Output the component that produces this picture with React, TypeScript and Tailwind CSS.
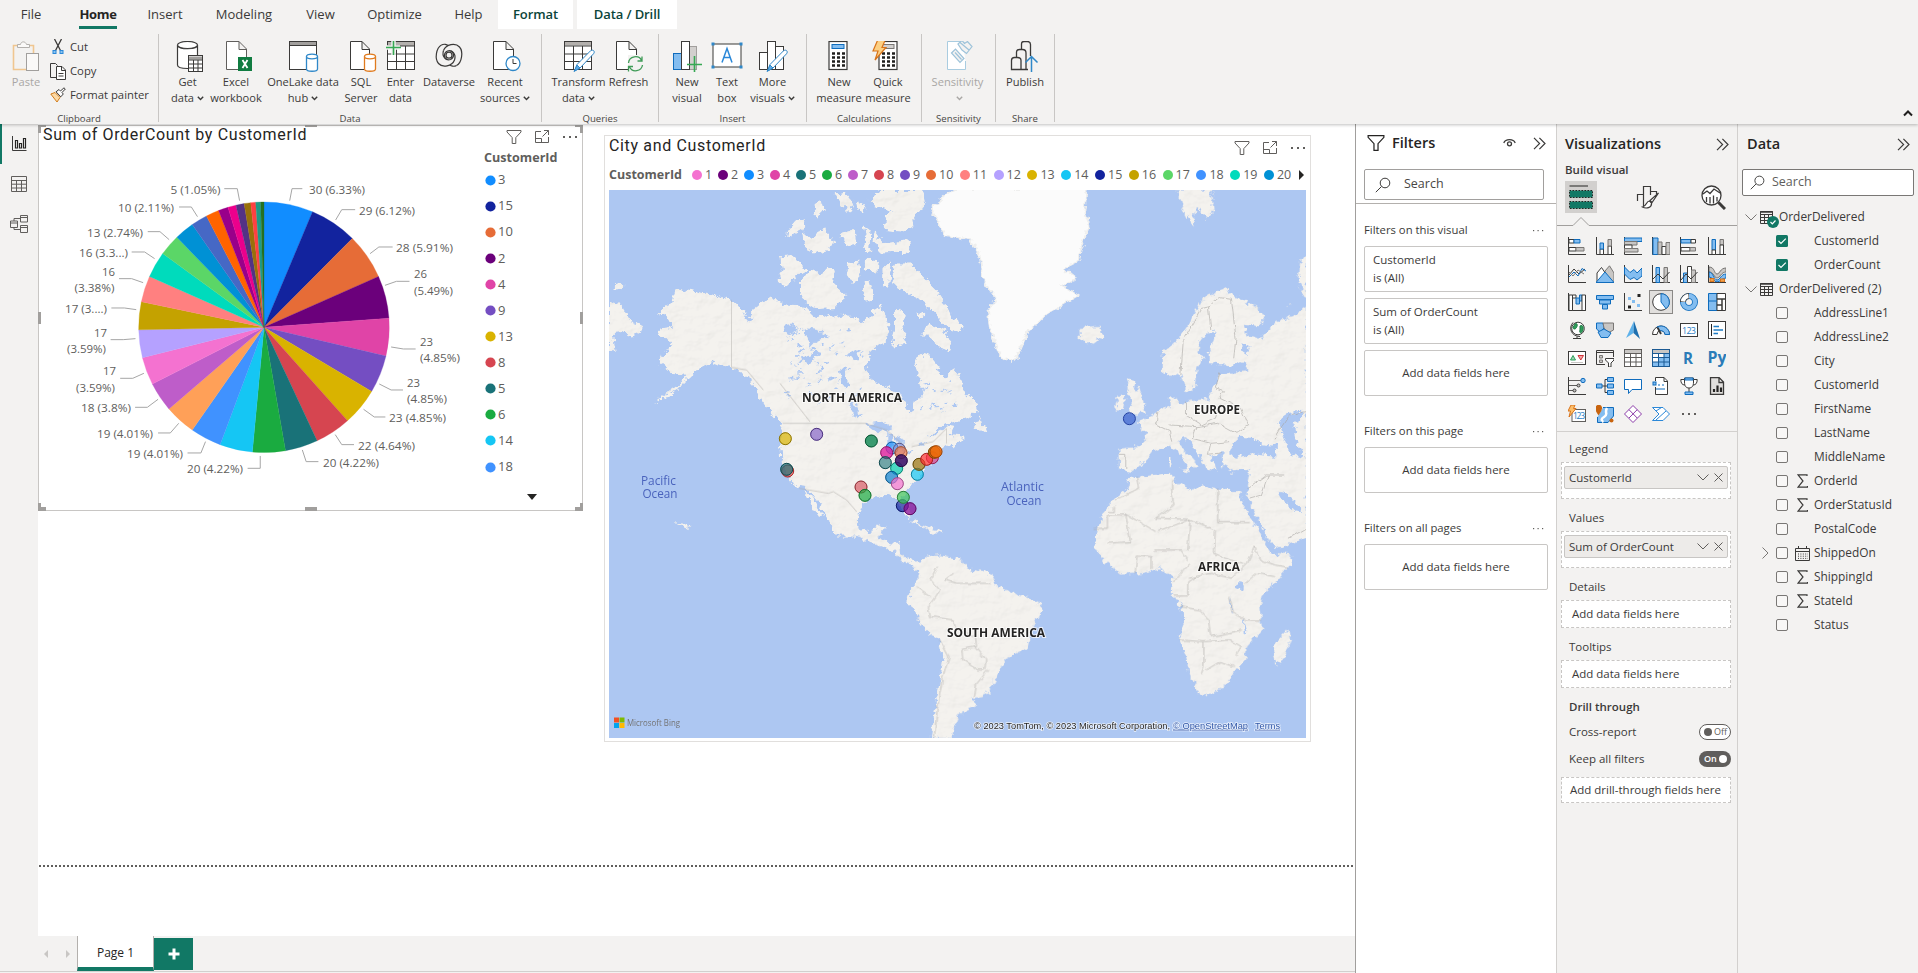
import React from "react";

type P = { children?: React.ReactNode };

/* ---------- shared icon frame ---------- */
function Ico({ w = 32, h = 32, vb, children, className = "" }: { w?: number; h?: number; vb?: string; className?: string } & P) {
  return (
    <svg width={w} height={h} viewBox={vb ?? `0 0 ${w} ${h}`} fill="none" stroke="#3b3a39" strokeWidth="1" className={`block shrink-0 ${className}`}>
      {children}
    </svg>
  );
}

const Chev = () => (
  <svg width="7" height="5" viewBox="0 0 7 5" fill="none" stroke="currentColor" strokeWidth="1.4" className="mb-px ml-[3px] inline-block">
    <path d="M.8 .8 3.5 3.6 6.2 .8" />
  </svg>
);

const Filter = ({ s = 16, c = "#605e5c", sw = 1 }: { s?: number; c?: string; sw?: number }) => (
  <svg width={s} height={s} viewBox="0 0 16 16" fill="none" stroke={c} strokeWidth={sw} className="block shrink-0">
    <path d="M1 1.5H15V3L9.8 8.6V14.5H6.2V8.6L1 3Z" />
  </svg>
);
const Focus = () => (
  <Ico w={16} h={16}>
    <g stroke="#605e5c">
      <path d="M7 2.5H1.5V13.5H14.5V8M1.5 9.5H7.5V13.5M8.5 7.5 14.5 1.5M10 1.5H14.5V6" />
    </g>
  </Ico>
);
const Dots3 = ({ c = "#605e5c" }: { c?: string }) => (
  <svg width="16" height="4" viewBox="0 0 16 4" fill={c} className="block shrink-0">
    <rect x="1" y="1" width="2" height="2" /><rect x="7" y="1" width="2" height="2" /><rect x="13" y="1" width="2" height="2" />
  </svg>
);
const Dbl = () => (
  <Ico w={13} h={13}><path d="M1 .8 6.6 6.5 1 12.2M6.4 .8 12 6.5 6.4 12.2" strokeWidth="1.2" /></Ico>
);
const Search = ({ s = 16 }: { s?: number }) => (
  <Ico w={s} h={s} vb="0 0 16 16"><circle cx="10" cy="6" r="4.8" /><path d="M6.5 9.5 .8 15.2" /></Ico>
);
const Calendar = () => (
  <Ico w={17} h={15}>
    <path d="M1.5 2.5H15.5V14.5H1.5ZM1.5 5.5H15.5M4.5 0V3M12.5 0V3" />
    <path d="M4 8H14M4 10.2H14M4 12.4H14" strokeDasharray="1 1.4" />
  </Ico>
);

/* ---------- ribbon icons ---------- */
const Paste = () => (
  <Ico w={30} h={32}>
    <path d="M9 4.5H2.5V28.5H15M18 4.5H22.5V12" stroke="#f0c690" strokeWidth="1.6" />
    <path d="M6.5 6.5V3.5H9.5C10 0 14.500 0 15.500 3.500H18.500V6.500Z" stroke="#b3b0ad" fill="#faf9f8" />
    <rect x="15.500" y="12.500" width="12" height="17" stroke="#a19f9d" fill="#faf9f8" />
  </Ico>
);
const Cut = () => (
  <Ico w={16} h={16}><path d="M4.500 0 10.500 11.500M11.500 0 5.500 11.500" strokeWidth="1.3" /><rect x="3" y="11.500" width="3" height="3" stroke="#2b88d8" fill="#8cc4f0" /><rect x="10" y="11.500" width="3" height="3" stroke="#2b88d8" fill="#8cc4f0" /></Ico>
);
const Copy = () => (
  <Ico w={16} h={17}><path d="M6 14.500H.5V.5H5.500L7.500 2.500" /><path d="M6.500 3.500H12L15.500 7V16.500H6.500ZM11.500 3.500V7.500H15.500M8.500 10.500H13.500M8.500 13H13.500" fill="#fff" /></Ico>
);
const Painter = () => (
  <Ico w={16} h={16}><path d="M.8 7 5 5.500 10 10.500 7 15Z" stroke="#d17b18" fill="#fbd9a5" /><path d="M6 4.800 9 2.500 10.500 4 14 .8 15.300 2 12 5.500 13.300 7 10.800 9.800Z" fill="#fff" /></Ico>
);
const GetData = () => (
  <Ico>
    <g transform="translate(-1 0)"><path d="M6.500 4V24C6.500 26.500 12 27.500 16.500 27.500H18V15H26.500V4C26.500 9 6.500 9 6.500 4Z" fill="#fff" strokeWidth="1.200" /><ellipse cx="16.500" cy="4" rx="10" ry="3.500" fill="#fff" strokeWidth="1.200" /></g>
    <rect x="16.500" y="14.500" width="14" height="16" fill="#fff" /><path d="M16.500 17H30.500" stroke="#a19f9d" strokeWidth="3" /><path d="M16.500 14.500H30.500V30.500H16.500ZM16.500 19H30.500M16.500 23H30.500M16.500 27H30.500M21.500 19V30.500M26 19V30.500" />
  </Ico>
);
const Excel = () => (
  <Ico>
    <path d="M6.500 .5H19L26.500 8V28.500H6.500ZM19 .5V8.500H26.500" fill="#fff" stroke="#605e5c" />
    <rect x="18" y="16" width="14" height="14" fill="#107c41" stroke="none" />
    <path d="M22.500 19 27.500 27M27.500 19 22.500 27" stroke="#fff" strokeWidth="1.800" />
  </Ico>
);
const Cyl = ({ x, y, c }: { x: number; y: number; c: string }) => (
  <g stroke={c} fill="#fff" strokeWidth="1.300"><path d={`M${x} ${y + 2.500}V${y + 15}C${x} ${y + 18} ${x + 11} ${y + 18} ${x + 11} ${y + 15}V${y + 2.500}`} /><ellipse cx={x + 5.500} cy={y + 2.500} rx="5.500" ry="2.300" /></g>
);
const OneLake = () => (
  <Ico><rect x="2.500" y=".5" width="27" height="28" fill="#fff" /><path d="M3 2.500H29" stroke="#a19f9d" strokeWidth="3" /><path d="M2.500 4.500H29.500" /><Cyl x={19.500} y={13} c="#2f88c9" /></Ico>
);
const Sql = () => (
  <Ico><path d="M5.500 .5H17L24.500 8V28.500H5.500ZM17 .5V8.500H24.500" fill="#fff" /><Cyl x={19.500} y={13} c="#e07b1f" /></Ico>
);
const Enter = () => (
  <Ico><rect x="2.500" y=".5" width="27" height="28" fill="#fff" /><path d="M3 3H29" stroke="#b3b0ad" strokeWidth="4" /><path d="M2.500 .5H29.500V28.500H2.500ZM2.500 5H29.500M2.500 13H29.500M2.500 20.500H29.500M11.500 5V28.500M20.500 5V28.500" /><path d="M8.500 -2V14M.5 6.500H15" stroke="#f3f2f1" strokeWidth="4.500" /><path d="M8.500 -1V14M1 6.500H16" stroke="#36a853" strokeWidth="1.600" /></Ico>
);
const Dataverse = () => (
  <Ico>
    <g strokeWidth="1.200">
      <path d="M8.500 4C3 7 1.500 18 5.500 22.500C9.500 27 19 25.500 21.500 19C23.500 13 19 8.500 14.500 10C10.500 11.500 10.500 17.500 14.500 18.500" />
      <path d="M23.500 24.500C29 21.500 30.500 10.500 26.500 6C22.500 1.500 13 3 10.500 9.500" />
      <path d="M8.500 4C11 2.500 14 3.500 15 4.500M23.500 24.500C21 26 18 25 17 24" />
      <path d="M10.500 9.500C8.500 15.500 13 20 17.500 18.500C21.500 17 21.500 11 17.500 10" />
      <circle cx="16" cy="14.200" r="3" />
    </g>
  </Ico>
);
const Recent = () => (
  <Ico><path d="M4.500 .5H17L24.500 8V28.500H4.500ZM17 .5V8.500H24.500" fill="#fff" /><circle cx="24" cy="22.500" r="7" fill="#fff" stroke="#2f88c9" strokeWidth="1.300" /><path d="M24 18V22.500H27.500" /></Ico>
);
const Pen = () => (
  <g stroke="#2f88c9"><path d="M12 29.500 14 23.500 27.500 9.800C30 8 32.500 10.500 30.500 12.800L17 27Z" fill="#fff" /><path d="M11 30.500 14 24 17 27Z" fill="#5ea9e2" /></g>
);
const Transform = () => (
  <Ico><rect x="1.500" y=".5" width="27" height="28" fill="#fff" /><path d="M2 2.500H28" stroke="#b3b0ad" strokeWidth="4" /><path d="M1.500 .5H28.500V28.500H1.500ZM1.500 5H28.500M1.500 13H28.500M1.500 20.500H28.500M10.500 5V28.500M19.500 5V28.500" /><Pen /></Ico>
);
const Refresh = () => (
  <Ico><path d="M3.500 .5H16L23.500 8V28.500H3.500ZM16 .5V8.500H23.500" fill="#fff" /><rect x="15" y="14" width="15" height="17" fill="#f3f2f1" stroke="none" /><path d="M15.500 22C16 15 26 13.500 28.500 19.500M29 15.500V20H24.500M29.500 24C28.500 30.500 19.500 32 16.500 26M15.500 30.500V25.500H20" stroke="#3f9b57" strokeWidth="1.300" /></Ico>
);
const NewVisual = () => (
  <Ico><rect x="18.500" y="5.500" width="7" height="23" fill="#d2d0ce" stroke="#a19f9d" /><rect x="2.500" y="12.500" width="8" height="16" fill="#83bdf0" stroke="#0f6cbd" /><rect x="10.500" y=".5" width="8" height="28" fill="#fff" /><path d="M23.500 15V31M16 23.500H31" stroke="#36a853" strokeWidth="1.600" /></Ico>
);
const TextBox = () => (
  <Ico><rect x="2" y="3" width="28" height="23" fill="#fff" /><path d="M11 21.500 16 7.500 21 21.500M12.800 16.500H19.200" stroke="#2b88d8" strokeWidth="1.500" /><g fill="#2f88c9" stroke="none"><rect x=".5" y="1.500" width="3" height="3" /><rect x="28.500" y="1.500" width="3" height="3" /><rect x=".5" y="24.500" width="3" height="3" /><rect x="28.500" y="24.500" width="3" height="3" /></g></Ico>
);
const MoreVisuals = () => (
  <Ico><rect x="2.500" y="11.500" width="8" height="17" fill="#fff" /><rect x="10.500" y=".5" width="8" height="28" fill="#fff" /><rect x="18.500" y="5.500" width="8" height="23" fill="#fff" /><g transform="translate(-1 0)"><Pen /></g></Ico>
);
const Calc = ({ hl = "#83bdf0", hs = "#0f6cbd" }: { hl?: string; hs?: string }) => (
  <g><rect x="7" y=".5" width="18" height="28" fill="#fff" strokeWidth="1.200" /><rect x="10" y="3.500" width="12" height="4" fill={hl} stroke={hs} /><path d="M10 12.500H23M10 16.500H23M10 20.500H23M10 24.500H23" strokeWidth="2.400" strokeDasharray="3 2" stroke="#201f1e" /></g>
);
const NewMeasure = () => <Ico><g transform="translate(-1 0)"><Calc /></g></Ico>;
const Quick = () => (
  <Ico><Calc hl="#d2d0ce" hs="#797775" /><path d="M5.500 -1H13L10 6H14L3 18.500 6 9.500H1Z" transform="translate(0 .5)" fill="#fcd083" stroke="#d8731b" strokeWidth="1.200" /></Ico>
);
const Sens = () => (
  <Ico><path d="M20.500 .5H5.500V28.500H23.500V20" stroke="#a9cce0" fill="#fff" /><g stroke="#9dc3da" strokeWidth="1.200"><path d="M9.500 12 13.500 8 22 17.500 18 21.500ZM13 11.500 19.500 18.500" fill="#f3f2f1" /><path d="M16 3 20 -.5 22.500 2.500 25.500 .5 30 5.500 24.500 12.500 20 9ZM18 1.500 27 9" fill="#f3f2f1" /></g></Ico>
);
const Publish = () => (
  <Ico><path d="M12.500 8V3.500C12.500 1.500 13 .5 15 .5H18.500C20.500 .5 21.500 1.500 21.500 3.500V15M7.500 16V11C7.500 9 8.500 8.500 10.500 8.500H13.500C16 8.500 17 9.500 17 12V28.500M2.500 28.500V19.500C2.500 17.500 3.500 16.500 5.500 16.500H8.500C11 16.500 12 17.500 12 19.500V28.500ZM11 28.500H19" strokeWidth="1.300" /><path d="M22.500 31V16M16.500 21.500 22.500 15.500 28.500 21.500" stroke="#2f88c9" strokeWidth="1.500" /></Ico>
);

function Btn({ w, icon, a, b, chev, off }: { w: string; icon: React.ReactNode; a: string; b?: string; chev?: boolean; off?: boolean }) {
  return (
    <div className={`flex shrink-0 flex-col items-center ${w} ${off ? "text-[#a9a7a5]" : "text-[#3b3a39]"}`}>
      {icon}
      <div className="mt-px h-4 whitespace-nowrap text-[11.100px] leading-4">{a}</div>
      <div className="h-4 whitespace-nowrap text-[11.100px] leading-4">{b}{chev && <Chev />}</div>
    </div>
  );
}
function Group({ w, name, pad, children }: { w: string; name: string; pad: string } & P) {
  return (
    <div className={`flex h-[88px] shrink-0 flex-col border-r border-[#c8c6c4] ${w}`}>
      <div className={`flex h-[76px] pt-[7px] ${pad}`}>{children}</div>
      <div className="h-[12px] text-center text-[9.600px] leading-[17px] text-[#484644]">{name}</div>
    </div>
  );
}

function Ribbon() {
  const tab = "flex h-[30px] items-center justify-center shrink-0 text-[13px] text-[#3b3a39]";
  return (
    <header className="relative z-10 h-[124px] shrink-0 bg-[#f3f2f1] shadow-[0_1px_3px_rgba(0,0,0,0.25)]">
      <div className="flex h-[29px]">
        <div className={`${tab} w-[62px]`}>File</div>
        <div className="flex w-[72px] shrink-0 justify-center">
          <div className="flex h-[29px] w-[38px] items-center justify-center border-b-[3px] border-[#117865] pt-[3px] text-[13px] font-bold tracking-[-0.300px] text-[#252423]">Home</div>
        </div>
        <div className={`${tab} w-[62px]`}>Insert</div>
        <div className={`${tab} w-[96px]`}>Modeling</div>
        <div className={`${tab} w-[57px]`}>View</div>
        <div className={`${tab} w-[91px]`}>Optimize</div>
        <div className={`${tab} w-[57px]`}>Help</div>
        <div className="ml-px flex w-[75px] shrink-0 items-center justify-center bg-white text-[13px] font-semibold tracking-[-0.100px] text-[#0b453a]">Format</div>
        <div className="ml-1 flex w-[100px] shrink-0 items-center justify-center bg-white text-[13px] font-semibold tracking-[-0.100px] text-[#0b453a]">Data / Drill</div>
      </div>
      <div className="flex pt-[5px]">
        <Group w="w-[159px]" name="Clipboard" pad="pl-[8px]">
          <Btn w="w-[36px]" icon={<Paste />} a="Paste" off />
          <div className="ml-[6px] flex flex-col text-[11.300px] text-[#3b3a39]">
            <div className="-mt-[3px] flex h-[18px] items-center gap-[4px]"><Cut />Cut</div>
            <div className="mt-[6px] flex h-[18px] items-center gap-[4px]"><Copy />Copy</div>
            <div className="mt-[6px] flex h-[18px] items-center gap-[4px] whitespace-nowrap"><Painter />Format painter</div>
          </div>
        </Group>
        <Group w="w-[383px]" name="Data" pad="pl-[9px]">
          <Btn w="w-[39px]" icon={<GetData />} a="Get" b="data" chev />
          <Btn w="w-[58px]" icon={<Excel />} a="Excel" b="workbook" />
          <Btn w="w-[76px]" icon={<OneLake />} a="OneLake data" b="hub" chev />
          <Btn w="w-[40px]" icon={<Sql />} a="SQL" b="Server" />
          <Btn w="w-[39px]" icon={<Enter />} a="Enter" b="data" />
          <Btn w="w-[58px]" icon={<Dataverse />} a="Dataverse" />
          <Btn w="w-[54px]" icon={<Recent />} a="Recent" b="sources" chev />
        </Group>
        <Group w="w-[117px]" name="Queries" pad="pl-[8px]">
          <Btn w="w-[57px]" icon={<Transform />} a="Transform" b="data" chev />
          <Btn w="w-[43px]" icon={<Refresh />} a="Refresh" />
        </Group>
        <Group w="w-[148px]" name="Insert" pad="pl-[7px]">
          <Btn w="w-[42px]" icon={<NewVisual />} a="New" b="visual" />
          <Btn w="w-[38px]" icon={<TextBox />} a="Text" b="box" />
          <Btn w="w-[53px]" icon={<MoreVisuals />} a="More" b="visuals" chev />
        </Group>
        <Group w="w-[115px]" name="Calculations" pad="pl-[8px]">
          <Btn w="w-[48px]" icon={<NewMeasure />} a="New" b="measure" />
          <Btn w="w-[50px]" icon={<Quick />} a="Quick" b="measure" />
        </Group>
        <Group w="w-[74px]" name="Sensitivity" pad="pl-[8px]"><Btn w="w-[55px]" icon={<Sens />} a="Sensitivity" chev off /></Group>
        <Group w="w-[59px]" name="Share" pad="pl-[8px]"><Btn w="w-[42px]" icon={<Publish />} a="Publish" /></Group>
        <div className="flex flex-1 items-end justify-end pr-[5px] pb-[5px]">
          <svg width="10" height="7" viewBox="0 0 10 7" fill="none" stroke="#201f1e" strokeWidth="2"><path d="M1 5.500 5 1.500 9 5.500" /></svg>
        </div>
      </div>
    </header>
  );
}

/* ---------- pie visual ---------- */
const SLICES: [number, string][] = [
  [30, "#118dff"], [29, "#12239e"], [28, "#e66c37"], [26, "#6b007b"], [23, "#e044a7"], [23, "#744ec2"], [23, "#d9b300"], [22, "#d64550"],
  [20, "#197278"], [20, "#1aab40"], [20, "#15c6f4"], [19, "#4092ff"], [19, "#ffa058"], [18, "#be5dc9"], [17, "#f472d0"], [17, "#b5a1ff"],
  [17, "#c4a200"], [16, "#ff8080"], [16, "#00dbbc"], [13, "#5bd667"], [12, "#0091d5"], [10, "#4668c5"], [8, "#ff6300"], [6, "#99008a"],
  [5, "#ec008c"], [5, "#533285"], [4, "#99700a"], [3, "#ff4141"], [3, "#1f9a85"], [2, "#257123"],
];
/* text, x, y, width */
const LABELS: [string, number, number, number][] = [
  ["30 (6.33%)", 309, 190, 56], ["29 (6.12%)", 359, 211, 56], ["28 (5.91%)", 396, 248, 57], ["26", 414, 274, 13], ["(5.49%)", 414, 291, 39],
  ["23", 420, 342, 13], ["(4.85%)", 420, 358, 40], ["23", 407, 383, 13], ["(4.85%)", 407, 399, 40], ["23 (4.85%)", 389, 418, 57], ["22 (4.64%)", 358, 446, 57],
  ["20 (4.22%)", 323, 463, 56], ["20 (4.22%)", 187, 469, 56], ["19 (4.01%)", 127, 454, 56], ["19 (4.01%)", 97, 434, 56], ["18 (3.8%)", 81, 408, 50],
  ["17", 103, 371, 13], ["(3.59%)", 76, 388, 39], ["17", 94, 333, 13], ["(3.59%)", 67, 349, 39], ["17 (3....)", 65, 309, 42], ["16", 102, 272, 13],
  ["(3.38%)", 74.500, 287.500, 40], ["16 (3.3...)", 79, 253, 49], ["13 (2.74%)", 87, 233, 56], ["10 (2.11%)", 118, 208, 56], ["5 (1.05%)", 170.500, 190, 50],
];
const LEADERS =
  "M757 242 763 206 790 206M877 300 893 269 928 269M967 401 990 381 1026 381M1006 496 1036 484 1070 484M1022 681 1054 687 1086 687M991 792 1022 810 1053 810M950 868 978 891 1007 891M876 944 893 974 925 974M790 990 800 1025 832 1025M680 1008 680 1045 647 1045M537 965 525 999 490 999M467 910 445 939 413 939M413 838 385 862 353 862M376 760 347 775 314 775M354 656 322 659 289 659M356 569 325 564 291 564M374 488 344 476 311 476M404 416 378 396 344 396M442 359 418 335 386 335M516 290 500 261 468 261M626 242 620 206 586 206";

function Pie() {
  const cx = 264, cy = 327.300, r = 125.300;
  let acc = 0;
  const pt = (v: number) => {
    const a = (v / 474) * Math.PI * 2;
    return `${(cx + r * Math.sin(a)).toFixed(2)} ${(cy - r * Math.cos(a)).toFixed(2)}`;
  };
  return (
    <svg width="440" height="340" viewBox="44 152 440 340" className="block shrink-0">
      {SLICES.map(([v, c], i) => {
        const s = acc;
        acc += v;
        return <path key={i} d={`M${cx} ${cy}L${pt(s)}A${r} ${r} 0 0 1 ${pt(acc)}Z`} fill={c} stroke={c} strokeWidth=".3" />;
      })}
      <path d={LEADERS} transform="translate(0 120) scale(.3827 .3333)" fill="none" stroke="#a6a6a6" vectorEffect="non-scaling-stroke" />
      <g fill="#605e5c" fontSize="11.500" fontFamily="'Open Sans', sans-serif">
        {LABELS.map(([t, x, y, w], i) => (
          <text key={i} x={x} y={y + 4} textLength={w} lengthAdjust="spacingAndGlyphs">{t}</text>
        ))}
      </g>
    </svg>
  );
}
const Corner = ({ c }: { c: string }) => <div className={`absolute border-[#a19f9d] ${c}`} />;

function PieVisual() {
  const legend: [string, string][] = [
    ["3", "#118dff"], ["15", "#12239e"], ["10", "#e66c37"], ["2", "#6b007b"], ["4", "#e044a7"], ["9", "#744ec2"], ["13", "#d9b300"],
    ["8", "#d64550"], ["5", "#197278"], ["6", "#1aab40"], ["14", "#15c6f4"], ["18", "#4092ff"],
  ];
  return (
    <section className="relative mt-px flex h-[386px] w-[545px] shrink-0 flex-col border border-[#c8c6c4]">
      <Corner c="-left-px -top-px h-2 w-2 border-l-[3px] border-t-2" />
      <Corner c="-right-px -top-px h-2 w-2 border-r-[3px] border-t-2" />
      <Corner c="-left-px -bottom-px h-2 w-2 border-b-[4px] border-l-[3px]" />
      <Corner c="-right-px -bottom-px h-2 w-2 border-b-[4px] border-r-[3px]" />
      <Corner c="left-[266px] -top-px w-[12px] border-t-2" />
      <Corner c="left-[266px] -bottom-px w-[12px] border-t-[4px]" />
      <Corner c="-left-px top-[186px] h-[12px] border-l-[3px]" />
      <Corner c="-right-px top-[186px] h-[12px] border-l-[3px]" />
      <div className="flex h-[26px] items-start justify-between pr-[4px] pl-[4px]">
        <h2 className="font-['Roboto',sans-serif] text-[16px] leading-[18px] tracking-[0.650px] text-[#252423]">Sum of OrderCount by CustomerId</h2>
        <div className="mt-[3px] flex items-center gap-[12px]"><Filter /><Focus /><Dots3 /></div>
      </div>
      <div className="flex">
        <div className="ml-[5px]"><Pie /></div>
        <div className="flex flex-col">
          <div className="-mt-[3px] text-[12.600px] leading-[18px] font-bold text-[#605e5c]">CustomerId</div>
          <div className="flex flex-col">
            {legend.map(([n, c]) => (
              <div key={n} className="flex h-[26.100px] items-center gap-[2px] pl-px text-[13px] text-[#605e5c]">
                <svg width="11" height="11" viewBox="0 0 11 11"><circle cx="5.500" cy="5.500" r="5.100" fill={c} /></svg>{n}
              </div>
            ))}
          </div>
          <svg width="10" height="6" viewBox="0 0 10 6" className="mt-[14px] ml-[43px]"><path d="M0 0H10L5 6Z" fill="#252423" /></svg>
        </div>
      </div>
    </section>
  );
}

/* ---------- map visual ---------- */
const NA =
  "M255 325 300 336 345 348 395 362 430 385 447 415 470 378 512 350 550 372 590 375 620 392 650 408 680 402 700 412 735 405 760 408 790 425 812 405 830 378 845 375 860 420 870 455 850 490 812 520 800 560 815 600 860 620 900 640 915 670 935 700 945 665 970 640 955 590 945 560 955 520 985 525 1010 555 1030 590 1060 570 1085 600 1090 630 1132 670 1137 690 1110 715 1060 727 1020 740 985 775 1020 752 1050 738 1062 742 1050 765 1100 770 1060 800 1035 790 1020 810 1022 825 1000 838 970 865 955 900 925 925 905 950 918 965 935 1005 920 1012 900 985 890 955 860 945 830 952 800 958 780 985 772 1030 778 1070 700 1070 690 1025 660 975 625 925 600 922 575 905 560 880 545 850 540 800 548 742 525 710 500 680 480 650 455 600 420 580 395 562 340 545 310 560 270 592 230 632 155 674 240 610 258 588 215 582 180 555 190 520 215 500 205 480 170 460 175 445 215 440 200 415 175 395 215 370 225 335Z";
const BAJA = "M612 928 640 950 655 985 672 1015 655 1008 632 975 620 948Z";
const ARCTIC = [
  "M540 228 575 225 605 250 618 270 590 285 565 318 532 305 545 270Z",
  "M600 300 640 265 665 285 690 262 705 275 700 310 740 350 700 385 650 388 612 362 600 330Z",
  "M745 250 775 240 780 300 760 315 740 285Z", "M800 235 835 240 830 275 800 272Z", "M790 310 805 300 820 360 795 365Z",
  "M875 245 850 270 848 315 865 325 868 275Z", "M885 250 930 250 970 290 1010 330 1040 375 1055 410 1090 435 1080 460 1040 440 1000 395 960 360 930 340 890 330 872 290Z",
  "M985 430 1030 450 1060 490 1050 515 1015 500 980 470 960 470Z", "M885 400 900 385 915 410 905 440 925 490 880 500 875 470 885 440Z",
  "M585 125 612 120 608 145 560 172 565 150Z", "M605 150 640 180 660 150 680 145 685 175 705 180 690 210 640 220 612 195Z",
  "M715 160 765 150 770 200 745 205 735 180Z", "M790 135 812 150 808 215 790 205 800 180Z", "M825 150 850 190 925 180 930 215 840 218 820 180Z",
  "M805 60 840 30 970 30 975 70 940 115 945 145 905 155 850 150 855 110 880 95 820 75Z", "M705 40 735 35 760 70 750 98 725 78Z", "M770 60 795 75 790 98 775 90Z",
  "M640 75 665 62 672 88 650 118 645 95Z", "M45 312 70 315 70 325 42 326Z",
  "M27 365 60 375 95 425 132 435 122 460 95 470 60 450 38 475 45 515 27 512Z",
  "M1120 740 1140 708 1145 735 1165 745 1155 760Z", "M955 400 970 395 970 412 958 415Z", "M225 1025 260 1032 270 1050 255 1045Z",
];
const CENTRAL =
  "M468 175 485 205 500 225 522 250 513 262 545 285 585 302 610 322 638 332 652 352 662 365 690 382 700 365 672 360 655 340 652 308 625 305 605 292 625 258 605 255 592 275 570 268 560 235 563 195 580 172 560 150 480 150Z";
const SA =
  "M678 378 712 348 742 345 782 357 802 387 852 400 868 440 912 465 950 482 962 510 942 560 930 625 882 660 862 715 845 762 812 772 822 798 782 822 770 865 765 895 722 895 735 760 745 650 740 600 710 575 690 530 668 485 680 440 695 400Z";
const AFRICA =
  "M1150 118 1200 105 1245 98 1250 125 1290 148 1310 138 1350 148 1395 150 1400 190 1425 245 1440 290 1462 340 1508 345 1500 382 1475 422 1442 468 1436 500 1443 570 1410 620 1405 660 1385 692 1360 740 1330 765 1308 768 1285 710 1275 650 1262 600 1270 550 1265 500 1244 462 1248 410 1220 385 1180 400 1135 405 1100 370 1080 325 1082 280 1092 220 1120 175 1145 150Z";
const EUROPE =
  "M1360 490 1385 515 1430 545 1446 580 1440 605 1405 600 1408 630 1440 640 1470 592 1510 570 1540 540 1540 1240 1470 1272 1455 1245 1435 1190 1412 1130 1408 1085 1415 1035 1380 1040 1352 1020 1355 985 1330 995 1342 1038 1320 1030 1300 975 1275 940 1258 950 1300 1015 1282 1040 1268 990 1238 962 1205 978 1190 1005 1160 1042 1130 1035 1128 970 1175 965 1190 930 1168 895 1210 862 1240 842 1238 815 1250 810 1258 832 1325 820 1335 790 1350 745 1410 738 1400 712 1372 722 1325 715 1325 680 1342 620 1325 620 1300 665 1315 690 1300 740 1295 790 1275 800 1262 748 1245 757 1225 740 1225 680 1260 640 1285 590 1310 522Z";
const GREENLAND =
  "M770 190 1060 190 1055 260 1066 300 1050 360 1040 410 1012 430 1038 462 1005 480 1040 512 970 570 932 620 910 690 895 712 870 690 850 620 845 560 862 520 835 470 830 400 808 345 750 330 738 290 720 250Z";
const ISLES = [
  "M1255 190 1330 190 1337 255 1320 280 1298 250 1290 312 1272 260Z", "M1042 608 1090 605 1096 635 1070 662 1045 645Z", "M1155 755 1170 790 1192 862 1145 872 1160 830 1145 785Z",
  "M1130 812 1145 810 1140 852 1122 855Z", "M1525 400 1540 395 1540 525 1520 470Z", "M1495 535 1503 540 1500 548Z",
];
const CARIB = [
  "M665 240 690 242 712 262 735 268 750 280 722 282 700 260Z", "M1500 565 1503 600 1485 668 1470 672 1463 640 1472 605Z", "M1240 50 1247 50 1247 80 1240 78Z", "M1262 85 1288 82 1284 98Z",
  "M185 252 197 262 193 272Z", "M180 248 188 252 184 256Z", "M1368 102 1385 98 1378 106Z",
];
const WATERS12 = [
  "M550 435 585 432 590 455 560 470Z", "M610 445 650 450 690 470 650 480 630 500 620 470Z", "M600 540 640 520 660 525 625 550Z", "M720 570 735 560 745 620 728 615Z",
  "M745 670 760 660 775 700 790 705 770 715Z", "M795 735 850 725 880 745 855 755 815 750Z", "M862 755 880 770 878 800 862 800Z", "M885 765 915 780 912 815 898 800Z", "M905 825 945 808 935 820Z",
  "M945 795 975 785 970 797Z", "M430 395 455 420 445 425Z", "M740 525 780 505 765 540Z",
];
const WATERSEU = [
  "M1378 958 1395 935 1425 940 1440 955 1475 960 1470 995 1420 988 1385 998 1370 985Z", "M1490 865 1530 860 1525 890 1510 900 1520 960 1535 1000 1505 990 1490 935 1480 900Z",
  "M1478 1100 1500 1110 1530 1160 1515 1160 1490 1130Z", "M1395 655 1415 668 1410 690 1400 680Z",
];
const BORDERS12 = "M394 360V562L440 570 490 630M548 730H795L860 750 905 790M935 800 1000 785 1040 745V790M598 925 685 940 700 935 740 960 770 995M540 610 630 725";
const BORDERS5 =
  "M735 380 720 420 740 450 715 500 720 530 770 540 775 565 818 590 820 620 788 628 790 660 822 690 838 690 840 660 815 620M770 400 750 420 775 430 850 430M690 440 720 470M818 735 845 690M740 600 760 650 745 720 735 800 728 890M820 735 815 770M1170 110 1175 145 1120 180M1245 120V160L1250 195 1210 235 1285 238 1340 270M1345 145V248H1415M1340 270 1338 340 1370 360 1405 370M1120 200V215H1105M1145 220 1155 305 1105 310M1145 220 1210 275M1215 275 1285 238 1280 330M1205 330H1265L1280 360M1165 400 1170 345 1200 350V390M1285 370 1250 425M1280 415 1330 400 1375 415 1410 370M1265 500 1305 510 1325 540 1330 590 1400 570M1262 600 1315 605 1370 600M1315 605V680L1310 700M1320 690 1350 665 1380 680M1370 600 1395 620 1385 645M1405 430 1430 400 1470 410M1370 470 1380 520 1405 540H1442M1410 370 1425 320 1440 360 1470 375 1500 382M1248 465H1280V425L1300 410M1075 265H1105V225H1145";
const BORDERS4 =
  "M1265 750 1270 650 1310 550 1325 545 1330 615M1325 545 1350 515 1375 520 1385 640 1380 700M1350 745 1340 790 1360 800 1350 820 1395 850 1410 900 1385 925M1275 830V870L1310 900 1340 880 1350 840M1215 860 1210 900 1240 920 1245 950M1240 900 1300 905 1345 895 1385 925M1300 905 1290 940 1330 955 1370 950M1130 985H1145V1035M1330 955 1325 985 1355 980M1470 940 1500 870 1538 860M1410 1090 1450 1050H1490M1415 1120 1440 1110 1455 1050M1500 1240 1538 1210";

/* small inland lakes scattered over northern Canada */
const LAKES = Array.from({ length: 85 }, (_, i) => {
  const f = (n: number) => { const s = Math.sin(i * n + n) * 43758.5453; return s - Math.floor(s); };
  const east = i % 5 === 0;
  const x = east ? 960 + f(7.31) * 110 : 560 + f(12.9898) * 230;
  const y = east ? 600 + f(3.17) * 100 : 425 + f(78.233) * 240 + (x - 560) * 0.12;
  return { x, y, w: 2 + f(4.7) * 8, h: 1.200 + f(9.1) * 3, r: -50 + f(5.3) * 60 };
});

/* cx, cy, fill, opacity */
const BUBBLES: [number, number, string, number][] = [
  [556, 776, "#d9b300", 0.7], [650, 763, "#744ec2", 0.6], [814, 783, "#0b8550", 0.8], [563, 873, "#ff4141", 0.6], [560, 868, "#197278", 0.7], [876, 804, "#118dff", 0.6],
  [898, 808, "#8a8ad0", 0.5], [903, 818, "#f07b4b", 0.7], [860, 818, "#e0209f", 0.8], [856, 848, "#197278", 0.6], [890, 865, "#00cdb0", 0.7], [904, 842, "#3a0f66", 0.88],
  [952, 883, "#15c6f4", 0.7], [957, 853, "#99700a", 0.7], [875, 892, "#0b80d0", 0.7], [892, 911, "#f472d0", 0.7], [783, 921, "#d64550", 0.6], [795, 946, "#1aab40", 0.7],
  [997, 833, "#e8307a", 0.6], [980, 838, "#ff3030", 0.7], [1003, 817, "#c07000", 0.8], [1008, 815, "#f06a0a", 0.85], [907, 977, "#12239e", 0.7], [910, 952, "#3fc45a", 0.7], [930, 986, "#8b0f96", 0.75],
];

function WorldMap() {
  const t12 = "translate(600 180) scale(.33333)";
  const t4 = "translate(600 125) scale(.4592 .33333)";
  const t5 = "translate(600 440) scale(.4592 .33333)";
  return (
    <svg width="697" height="548" viewBox="609 190 697 548" className="block shrink-0">
      <defs>
        <filter id="land" x="609" y="190" width="697" height="548" filterUnits="userSpaceOnUse">
          <feTurbulence type="fractalNoise" baseFrequency=".16" numOctaves="3" seed="4" result="n" />
          <feDisplacementMap in="SourceGraphic" in2="n" scale="9" xChannelSelector="R" yChannelSelector="G" result="d" />
          <feTurbulence type="fractalNoise" baseFrequency=".055 .08" numOctaves="4" seed="9" result="m" />
          <feDiffuseLighting in="m" surfaceScale="1.600" diffuseConstant="1.120" lightingColor="#ffffff" result="l"><feDistantLight azimuth="225" elevation="62" /></feDiffuseLighting>
          <feComposite in="l" in2="d" operator="arithmetic" k1=".35" k2="0" k3=".66" k4="0" result="x" />
          <feComposite in="x" in2="d" operator="in" />
        </filter>
        <filter id="water" x="609" y="190" width="697" height="548" filterUnits="userSpaceOnUse">
          <feTurbulence type="fractalNoise" baseFrequency=".16" numOctaves="3" seed="4" result="n" />
          <feDisplacementMap in="SourceGraphic" in2="n" scale="8" xChannelSelector="R" yChannelSelector="G" />
        </filter>
        <filter id="line" x="609" y="190" width="697" height="548" filterUnits="userSpaceOnUse">
          <feTurbulence type="fractalNoise" baseFrequency=".12" numOctaves="2" seed="4" result="n" />
          <feDisplacementMap in="SourceGraphic" in2="n" scale="5" xChannelSelector="R" yChannelSelector="G" />
        </filter>
      </defs>
      <rect x="609" y="190" width="697" height="548" fill="#adc7f2" />
      <g filter="url(#land)" fill="#f3f1ed">
        <g transform={t12}><path d={NA} /><path d={BAJA} />{ARCTIC.map((d) => <path key={d} d={d} />)}</g>
        <g transform={t4}><path d={EUROPE} />{ISLES.map((d) => <path key={d} d={d} />)}</g>
        <g transform={t5}><path d={CENTRAL} /><path d={SA} /><path d={AFRICA} />{CARIB.map((d) => <path key={d} d={d} />)}</g>
      </g>
      <g filter="url(#water)"><path d={GREENLAND} transform={t4} fill="#fbfbfb" stroke="#efefee" strokeWidth="4" /></g>
      <g filter="url(#water)" fill="#adc7f2">
        <g transform={t12}>
          {WATERS12.map((d) => <path key={d} d={d} />)}
          {LAKES.map((l, i) => <ellipse key={i} rx={l.w} ry={l.h} transform={`translate(${l.x} ${l.y}) rotate(${l.r})`} />)}
        </g>
        <g transform={t4}>{WATERSEU.map((d) => <path key={d} d={d} />)}</g>
        <g transform={t5}><ellipse cx="1393" cy="440" rx="9" ry="10" /><path d="M1372 470 1380 520 1376 520ZM1402 530 1410 580 1404 578Z" /></g>
      </g>
      <g fill="none" stroke="#a9a6a2" strokeWidth="2" strokeLinejoin="round" opacity=".75">
        <path d={BORDERS12} transform={t12} />
        <g filter="url(#line)"><path d={BORDERS4} transform={t4} /><path d={BORDERS5} transform={t5} /></g>
      </g>
      {BUBBLES.map(([x, y, c, o], i) => (
        <g key={i}><circle cx={600 + x / 3} cy={180 + y / 3} r="6" fill={c} fillOpacity={o} /><circle cx={600 + x / 3} cy={180 + y / 3} r="6" fill="none" stroke={c} /><circle cx={600 + x / 3} cy={180 + y / 3} r="6" fill="none" stroke="#000" strokeOpacity=".35" /></g>
      ))}
      <circle cx="1129.400" cy="418.700" r="6" fill="#3a62cf" fillOpacity=".7" stroke="#2442a0" />
      <g fontFamily="'Open Sans', sans-serif">
        <g fontSize="11.500" fontWeight="700" fill="#252423" stroke="#fff" strokeOpacity=".7" strokeWidth="2" paintOrder="stroke">
          <text x="802" y="402" textLength="100" lengthAdjust="spacingAndGlyphs">NORTH AMERICA</text>
          <text x="1194" y="414" textLength="46" lengthAdjust="spacingAndGlyphs">EUROPE</text>
          <text x="1198" y="570.500" textLength="42" lengthAdjust="spacingAndGlyphs">AFRICA</text>
          <text x="947" y="636.500" textLength="98" lengthAdjust="spacingAndGlyphs">SOUTH AMERICA</text>
        </g>
        <g fontSize="12" fill="#4a63bd">
          <text x="641" y="485" textLength="35" lengthAdjust="spacingAndGlyphs">Pacific</text>
          <text x="642.500" y="498" textLength="35" lengthAdjust="spacingAndGlyphs">Ocean</text>
          <text x="1001" y="491" textLength="43" lengthAdjust="spacingAndGlyphs">Atlantic</text>
          <text x="1006.500" y="504.500" textLength="35" lengthAdjust="spacingAndGlyphs">Ocean</text>
        </g>
        <g stroke="none"><rect x="614" y="717.500" width="5" height="5" fill="#f25022" /><rect x="619.500" y="717.500" width="5" height="5" fill="#7fba00" /><rect x="614" y="723" width="5" height="5" fill="#00a4ef" /><rect x="619.500" y="723" width="5" height="5" fill="#ffb900" /></g>
        <text x="627" y="726" fontSize="8.500" fill="#737373" textLength="53" lengthAdjust="spacingAndGlyphs">Microsoft Bing</text>
      </g>
      <g fontFamily="'Liberation Sans', Arial, sans-serif" fontSize="9.500" stroke="#fff" strokeOpacity=".75" strokeWidth="1.500" paintOrder="stroke">
        <text x="974" y="728.500" fill="#201f1e" textLength="196" lengthAdjust="spacingAndGlyphs">© 2023 TomTom, © 2023 Microsoft Corporation,</text>
        <text x="1173" y="728.500" fill="#2f56a8" textLength="75" lengthAdjust="spacingAndGlyphs" textDecoration="underline">© OpenStreetMap</text>
        <text x="1255" y="728.500" fill="#2f56a8" textLength="25" lengthAdjust="spacingAndGlyphs" textDecoration="underline">Terms</text>
      </g>
    </svg>
  );
}

function MapVisual() {
  const colors = ["#f472d0", "#6b007b", "#118dff", "#e044a7", "#197278", "#1aab40", "#be5dc9", "#d64550", "#744ec2", "#e66c37", "#ff8080", "#b5a1ff", "#d9b300", "#15c6f4", "#12239e", "#c4a200", "#5bd667", "#4092ff", "#00dbbc", "#0091d5"];
  return (
    <section className="mt-[11px] ml-[21px] flex h-[607px] w-[707px] shrink-0 flex-col border border-[#e1dfdd] px-[4px]">
      <div className="flex h-[26px] items-start justify-between">
        <h2 className="font-['Roboto',sans-serif] text-[16px] leading-[19px] tracking-[0.650px] text-[#252423]">City and CustomerId</h2>
        <div className="mt-[4px] flex items-center gap-[12px]"><Filter /><Focus /><Dots3 /></div>
      </div>
      <div className="mb-[2px] flex h-[26px] items-center text-[12.500px] text-[#605e5c]">
        <div className="w-[83px] shrink-0 font-bold">CustomerId</div>
        {colors.map((c, i) => (
          <div key={c} className={`flex shrink-0 items-center gap-[3px] ${i < 9 ? "w-[26px]" : "w-[33.800px]"}`}>
            <svg width="10" height="10" viewBox="0 0 10 10"><circle cx="5" cy="5" r="5" fill={c} /></svg>{i + 1}
          </div>
        ))}
        <svg width="5" height="10" viewBox="0 0 5 10" className="ml-px shrink-0"><path d="M0 0 5 5 0 10Z" fill="#252423" /></svg>
      </div>
      <WorldMap />
    </section>
  );
}

/* ---------- filters pane ---------- */
const FHead = ({ t, m }: { t: string; m: string }) => (
  <div className={`flex h-4 items-center justify-between pr-[4px] text-[11.300px] text-[#3b3a39] ${m}`}>
    <span>{t}</span>
    <svg width="11" height="3" viewBox="0 0 11 3" fill="#605e5c"><rect y="1" width="1.200" height="1.200" /><rect x="4.500" y="1" width="1.200" height="1.200" /><rect x="9" y="1" width="1.200" height="1.200" /></svg>
  </div>
);
const FAdd = ({ m }: { m: string }) => (
  <div className={`flex h-[46px] items-center justify-center rounded-[2px] border border-[#c8c6c4] text-[11.500px] text-[#3b3a39] ${m}`}>Add data fields here</div>
);
const FCard = ({ t, m }: { t: string; m: string }) => (
  <div className={`flex h-[46px] flex-col justify-center rounded-[2px] border border-[#c8c6c4] pb-px pl-[8px] text-[11.500px] leading-[18px] text-[#3b3a39] ${m}`}><span>{t}</span><span>is (All)</span></div>
);
function Filters() {
  return (
    <aside className="flex w-[201px] shrink-0 flex-col border-l border-[#a19f9d] bg-white">
      <div className="flex h-[80px] shrink-0 flex-col border-b border-[#b3b0ad] pt-[9px] pl-[8px]">
        <div className="flex h-[20px] items-center pl-[3px]">
          <Filter s={18} c="#252423" sw={1.1} />
          <span className="ml-[7px] w-[111px] text-[14.500px] font-semibold text-[#252423]">Filters</span>
          <Ico w={13} h={10}><path d="M.8 5C2.500 .6 10.500 .6 12.200 5" strokeWidth="1.300" /><circle cx="6.500" cy="5.800" r="2" strokeWidth="1.300" /></Ico>
          <div className="ml-[17px]"><Dbl /></div>
        </div>
        <div className="mt-[16px] flex h-[31px] w-[180px] items-center rounded-[2px] border border-[#a19f9d] pl-[10px] text-[12.500px] text-[#484644]"><Search /><span className="ml-[13px]">Search</span></div>
      </div>
      <div className="flex flex-col pr-[8px] pl-[8px]">
        <FHead t="Filters on this visual" m="mt-[18px]" />
        <FCard t="CustomerId" m="mt-[8px]" /><FCard t="Sum of OrderCount" m="mt-[6px]" /><FAdd m="mt-[6px]" />
        <FHead t="Filters on this page" m="mt-[27px]" /><FAdd m="mt-[8px]" />
        <FHead t="Filters on all pages" m="mt-[27px]" /><FAdd m="mt-[8px]" />
      </div>
    </aside>
  );
}

/* ---------- visualization gallery icons, 18px grid ---------- */
const B = "#83bdf0", D = "#0f6cbd", G = "#c8c6c4";
const axis = <path d="M.5 0V17.500H18" />;
const GALLERY: React.ReactNode[] = [
  <>{axis}<path d="M1 2.500H6V6H1Z" fill="#fff" /><path d="M6 2.500H12V6H6Z" fill={B} stroke={D} /><path d="M1 10.500H8V14H1Z" fill="#fff" /><path d="M8 10.500H16V14H8Z" fill={G} stroke="#797775" /></>,
  <>{axis}<path d="M4 12H7.500V17.500H4Z" fill="#fff" /><path d="M4 6H7.500V12H4Z" fill={B} stroke={D} /><path d="M12 9H15.500V17.500H12Z" fill="#fff" /><path d="M12 2.500H15.500V9H12Z" fill={G} stroke="#797775" /></>,
  <>{axis}<path d="M.5 1H18V4.500H.5Z" fill={B} stroke={D} /><path d="M.5 4.500H13V8H.5Z" fill={G} stroke="#797775" /><path d="M.5 8H8V11.500H.5Z" fill="#fff" /><path d="M.5 11.500H14V15H.5Z" fill={G} stroke="#797775" /></>,
  <>{axis}<path d="M1 1H6V17.500H1Z" fill={B} stroke={D} /><path d="M6 5H10V17.500H6Z" fill={G} stroke="#797775" /><path d="M10 9.500H14V17.500H10Z" fill="#fff" /><path d="M14 5.500H18V17.500H14Z" fill={G} stroke="#797775" /></>,
  <>{axis}<path d="M1 2.500H11V6H1Z" fill={B} stroke={D} /><path d="M11 2.500H15.500V6H11Z" fill="#fff" /><path d="M1 10.500H10V14H1Z" fill="#fff" /><path d="M10 10.500H15.500V14H10Z" fill={G} stroke="#797775" /></>,
  <>{axis}<path d="M4 2.500H7.500V13H4Z" fill={B} stroke={D} /><path d="M4 13H7.500V17.500H4Z" fill="#fff" /><path d="M12 2.500H15.500V8H12Z" fill={G} stroke="#797775" /><path d="M12 8H15.500V17.500H12Z" fill="#fff" /></>,
  <>{axis}<path d="M1 10 6 4 11 9 17 4" /><path d="M1 12 6 7 10 11 14 3.500 18 6" stroke={D} /><path d="M1 7 5 11 10 5 16 9" stroke="#797775" /></>,
  <><path d="M9 6 13.500 .8 18 8V17.500H9Z" fill={G} stroke="#797775" /><path d="M1 8 5.500 2.500 10 9V17.500H1Z" fill="#fff" /><path d="M0 17.500 9 7 18 17.500Z" fill={B} stroke={D} /></>,
  <>{axis}<path d="M.5 2 6 7.500 10 4.500 13 8 18 3V11L13 15 10 12.500 6 14.500 .5 9Z" fill={B} stroke={D} /></>,
  <>{axis}<path d="M4 2.500H7.500V17.500H4Z" fill={B} stroke={D} /><path d="M12 2.500H15.500V17.500H12Z" fill={G} stroke="#797775" /><path d="M1 14 6 9 11 14 17.500 7" /></>,
  <>{axis}<path d="M3.500 8H7.500V17.500H3.500Z" fill={B} stroke={D} /><path d="M7.500 1.500H11.500V17.500H7.500Z" fill="#fff" /><path d="M11.500 5H15.500V17.500H11.500Z" fill={G} stroke="#797775" /><path d="M1 15 6 9 11 14 17.500 7" /></>,
  <><path d="M1 2C7 2 6 9 9 9S12 3 18 3V7C13 7 12 13 9 13S6 7 1 7Z" fill={G} stroke="#797775" /><path d="M1 7C5 7 6 15 9 15S13 9 18 9V13C14 13 12 17 9 17S5 12 1 12Z" fill={B} stroke={D} /><rect x="2" y="13.500" width="4" height="3" fill="#f0a04b" stroke="#d8731b" /><rect x="12.500" y="14" width="4" height="3" fill="#f0a04b" stroke="#d8731b" />{axis}</>,
  <>{axis}<path d="M1 2H4.500V17.500H1Z" fill="#fff" /><path d="M4.500 2H8V5H4.500Z" fill="#fff" /><path d="M8 5H11.500V11H8ZM11.500 2H14V8H11.500Z" fill={B} stroke={D} /><path d="M14 2H17.500V17.500H14Z" fill="#fff" /></>,
  <><path d="M.5 2.500H17.500V6.500H.5ZM3.500 7H14.500V11H3.500ZM6.500 11.500H11.500V16H6.500Z" fill={B} stroke={D} /></>,
  <>{axis}<g stroke="none"><rect x="13.500" y="1" width="3" height="3" fill="#252423" /><rect x="4" y="12.500" width="3" height="3" fill="#252423" /><rect x="4" y="4" width="3" height="3" fill={B} /><rect x="8" y="7" width="3" height="3" fill={B} /><rect x="13" y="11" width="3" height="3" fill={B} /></g></>,
  <><circle cx="9" cy="9" r="8.300" fill="#fff" /><path d="M9 .7A8.300 8.300 0 0 1 14 15.600L9 9Z" fill={B} stroke={D} /></>,
  <><circle cx="9" cy="9" r="6" stroke={D} strokeWidth="6" /><circle cx="9" cy="9" r="6" stroke={B} strokeWidth="4.400" /><path d="M3 9A6 6 0 0 1 9 3" stroke="#3b3a39" strokeWidth="6" /><path d="M3 8.500A6 6 0 0 1 8.500 3" stroke="#fff" strokeWidth="4.400" /></>,
  <><path d="M.5 .5H9V17.500H.5Z" fill={B} stroke={D} /><path d="M9 .5H17.500V6H9ZM9 6H14V12H9ZM9 12H14V17.500H9ZM14 6H17.500V17.500H14Z" fill="#fff" /><path d="M.5 8H9" stroke={D} /></>,
  <><circle cx="10" cy="7.500" r="6.300" fill="#fff" /><path d="M7 3C9 1.500 10 4 8.500 6.500S5 8 5 6.500ZM12 5C15 3 16 7 14.500 10S11 12 12 9Z" fill="#2f9e5b" stroke="#1f7a44" /><path d="M5 1.500C0 7 3.500 15.500 12 15.500M9 15.500V17.500M5 17.500H13" /></>,
  <><path d="M.5 2H7L8 7 4 11 .5 8Z" fill={B} stroke={D} /><path d="M7 2H17.500V9L12 12 8 7Z" fill={G} stroke="#797775" /><path d="M2 11 8 8 15 12 12 16.500H5Z" fill={B} stroke={D} /></>,
  <><path d="M10 0 2 17 9.500 12Z" fill="#5db1ea" stroke="none" /><path d="M10 0 16 18 9.500 12Z" fill="#1e6faf" stroke="none" /></>,
  <><path d="M.5 13.500A8.500 8.500 0 0 1 17.500 13.500H13A4 4 0 0 0 5 13.500Z" fill="#fff" /><path d="M5 6A8.500 8.500 0 0 1 17.500 13.500H13A4 4 0 0 0 8 9.800Z" fill={B} stroke={D} /><path d="M9 13 5.500 6.500" strokeWidth="1.800" /></>,
  <><rect x=".5" y="2.500" width="17" height="13" fill="#fff" /><text x="2" y="12.500" fontSize="9" stroke="none" fill="#1f7cc4" fontFamily="Open Sans" textLength="14">123</text></>,
  <><rect x=".5" y=".5" width="17" height="17" fill="#fff" /><path d="M3.500 3V15" stroke="#252423" /><path d="M5.500 5.500H11M5.500 9H15M5.500 12.500H10" stroke="#1f7cc4" strokeWidth="1.600" /></>,
  <><rect x=".5" y="2.500" width="17" height="13" fill="#fff" /><path d="M2.500 11 5 6.500 7.500 11Z" stroke="#2f9e5b" fill="#9bd6b0" /><path d="M10 6.500H15.500L12.800 11Z" stroke="#d13438" fill="#f3a6a8" /><path d="M3 13.500H15" stroke={G} /></>,
  <><path d="M9 15.500H.5V1.500H17.500V8M.5 3.500H17.500" /><path d="M3.500 6.500H6.500V9H3.500ZM3.500 11H6.500V13.500H3.500Z" fill={G} stroke="#797775" /><path d="M9.500 9.500H18V11L15 14V18H12.500V14L9.500 11Z" fill="#fff" /></>,
  <><rect x=".5" y=".5" width="17" height="17" fill="#fff" /><path d="M1 2.500H17" strokeWidth="3" stroke={G} /><path d="M.5 .5H17.500V17.500H.5ZM.5 4.500H17.500M.5 8.500H17.500M.5 13H17.500M6.500 4.500V17.500M12 4.500V17.500" stroke="#605e5c" /></>,
  <><rect x=".5" y=".5" width="17" height="17" fill="#fff" /><path d="M1 2.500H17" strokeWidth="3" stroke={G} /><path d="M6.500 9H12V4.500H17.500V17.500H.5V13H6.500Z" fill={B} stroke="none" /><path d="M.5 .5H17.500V17.500H.5ZM.5 4.500H17.500M.5 8.500H17.500M.5 13H17.500M6.500 4.500V17.500M12 4.500V17.500" stroke="#1b5a94" /></>,
  <text x="3" y="15" fontSize="15.500" fontWeight="700" stroke="none" fill="#2b7cb8" fontFamily="Open Sans" textLength="10" lengthAdjust="spacingAndGlyphs">R</text>,
  <text x="-.5" y="14" fontSize="15.500" fontWeight="700" stroke="none" fill="#2b7cb8" fontFamily="Open Sans" textLength="19" lengthAdjust="spacingAndGlyphs">Py</text>,
  <>{axis}<path d="M1 3.500H13M1 8.500H9M1 13.500H5" stroke="#605e5c" /><circle cx="15" cy="3.500" r="2.200" fill={B} stroke={D} /><circle cx="10.500" cy="8.500" r="1.500" fill={G} /><circle cx="6.500" cy="13.500" r="1.500" fill={G} /></>,
  <><path d="M6 9H9M9 2.500V15.500M9 2.500H12M9 9H12M9 15.500H12" /><path d="M.5 7H6V11H.5ZM11.500 .5H17.500V4.500H11.500ZM11.500 7H17.500V11H11.500ZM11.500 13.500H17.500V17.500H11.500Z" fill={B} stroke={D} /></>,
  <path d="M.5 2.500H17.500V12.500H8L4.500 16.500V12.500H.5Z" fill="#fff" stroke={D} />,
  <><path d="M3.500 4V.5H12L15.500 4V17.500H3.500V10" fill="#fff" /><path d="M12 .5V4.500H15.500" /><rect x="1" y="5" width="3" height="3" fill={B} stroke={D} /><path d="M6 8H8M10 8H12M4 12H13" stroke={D} /></>,
  <><path d="M4.500 1H13.500V5C13.500 9 12 11 9 11S4.500 9 4.500 5ZM4.500 2.500H.8C.8 6 2 8 5 8M13.500 2.500H17.200C17.200 6 16 8 13 8M9 11V15" fill="#fff" /><path d="M5 1H13V3H5Z" fill={B} stroke={D} /><path d="M5 15H13V17.500H5Z" fill={B} stroke={D} /></>,
  <><path d="M2.500 .5H11L15.500 5V17.500H2.500ZM11 .5V5.500H15.500" fill="#e1dfdd" strokeWidth="1.300" /><path d="M6 15V12M9.500 15V8.500M13 15V10.500" strokeWidth="2.200" stroke="#252423" /></>,
  <><rect x="4" y="4.500" width="13.500" height="12" fill="#fff" stroke="#605e5c" /><text x="5" y="14" fontSize="8.500" stroke="none" fill="#1f7cc4" fontFamily="Open Sans" textLength="12">123</text><path d="M3 0H7L5.500 3.500H8L1 12 2.500 6H0Z" fill="#fcbf6b" stroke="#d8731b" /></>,
  <><path d="M7 2.500H17.500V11L12 17.500H1.500V12" fill={B} stroke={D} /><path d="M11 3C8 8 13 9 8 12S8 16 6 17" stroke="#fff" strokeWidth="2.500" /><path d="M2.500 9C-2 3 1 .5 2.800 .5S7.500 3 2.500 9Z" fill="#c8640f" stroke="#c8640f" strokeWidth="1.500" /><circle cx="15.500" cy="15.500" r="2" fill="#c8640f" stroke="none" /></>,
  <g stroke="#8a3ba8"><path d="M9 .5 17.500 9 9 17.500 .5 9Z" fill="#fff" /><path d="M5 4.700 13.200 13M13.200 4.700 5 13" /></g>,
  <path d="M.5 2.500H11L17.500 9 11 15.500H.5L7 9ZM4 6 9.500 2.500M4 15 14 6" fill="#fff" stroke="#2b88d8" />,
  <g fill="#605e5c" stroke="none"><rect x="2" y="8" width="2" height="2" /><rect x="8" y="8" width="2" height="2" /><rect x="14" y="8" width="2" height="2" /></g>,
];

const Well = ({ t, m }: { t: string; m: string }) => (
  <div className={`ml-[4px] h-[37px] w-[170px] shrink-0 border border-dashed border-[#c8c6c4] bg-white ${m}`}>
    <div className="mt-[3px] ml-[2px] flex h-[23px] w-[164px] items-center rounded-[2px] border border-[#c8c6c4] bg-[#edebe9] pl-[4px] text-[11.500px] text-[#3b3a39]">
      <span className="flex-1">{t}</span>
      <Ico w={12} h={7}><path d="M.5 .5 6 6 11.500 .5" stroke="#605e5c" /></Ico>
      <Ico w={9} h={9} className="mr-[4px] ml-[5px]"><path d="M.5 .5 8.500 8.500M8.500 .5 .5 8.500" stroke="#605e5c" /></Ico>
    </div>
  </div>
);
const VLabel = ({ t, m }: { t: string; m: string }) => <div className={`ml-[12px] h-4 shrink-0 text-[11.500px] leading-4 text-[#3b3a39] ${m}`}>{t}</div>;
const VAdd = ({ t, m }: { t: string; m: string }) => (
  <div className={`ml-[4px] flex w-[170px] shrink-0 items-center border border-dashed border-[#c8c6c4] bg-white text-[11.500px] whitespace-nowrap text-[#3b3a39] ${m}`}>{t}</div>
);

function Visualizations() {
  return (
    <aside className="flex w-[181px] shrink-0 flex-col border-l border-[#d2d0ce] bg-[#f3f2f1]">
      <div className="mt-[10px] flex h-[20px] shrink-0 items-center justify-between pr-[8px] pl-[8px] text-[14.500px] font-semibold text-[#252423]">Visualizations<Dbl /></div>
      <div className="mt-[8px] ml-[8px] h-4 shrink-0 text-[11.500px] leading-4 font-semibold text-[#3b3a39]">Build visual</div>
      <div className="mt-[3px] flex h-[32px] shrink-0 items-center pl-[8px]">
        <div className="flex h-8 w-8 items-center justify-center bg-[#d2d0ce]">
          <Ico w={26} h={26}><path d="M1.500 2H20" stroke="#252423" /><path d="M1.500 6.500H24.500V13.500H1.500ZM1.500 17.500H24.500V24.500H1.500Z" fill="#117865" stroke="#252423" strokeDasharray="1.500 1.500" /></Ico>
        </div>
        <Ico w={24} h={24} className="ml-[39px]"><path d="M1.500 16V9.500H7.500V21M7.500 9.500V1.500H14.500V10M14.500 6.500H20.500V9" strokeWidth="1.200" /><path d="M22.500 8 14 15.500 16 17.500 22.500 8ZM13.500 16C10 16 11 21 6.500 22 10 24 16 23 15.500 18Z" fill="#fff" strokeWidth="1.200" /></Ico>
        <Ico w={25} h={25} className="ml-[41px]"><circle cx="10.500" cy="10.500" r="9.500" strokeWidth="1.300" fill="#fff" /><path d="M17.500 17.500 24 24" strokeWidth="3" /><path d="M2 9 6 6 9 8.500 13 4 19 8M5.500 17V12M9 18.500V12M12.500 18.500V10.500M16 16.500V12" strokeWidth="1.300" /></Ico>
      </div>
      <svg width="180" height="14" viewBox="0 0 180 14" fill="none" stroke="#a19f9d" className="block shrink-0"><path d="M0 12.500H16L24 4.500 32 12.500H180" /></svg>
      <div className="mt-[5px] grid shrink-0 grid-cols-[repeat(6,28px)] grid-rows-[repeat(7,28px)] pl-[6px]">
        {GALLERY.map((g, i) => (
          <div key={i} className={`flex items-center justify-center ${i === 15 ? "m-[2px] border border-[#8a8886] bg-[#e1dfdd]" : ""}`}><Ico w={18} h={18}>{g}</Ico></div>
        ))}
      </div>
      <div className="mt-[3px] h-px shrink-0 bg-[#d2d0ce]" />
      <VLabel t="Legend" m="mt-[9px]" /><Well t="CustomerId" m="mt-[5px]" />
      <VLabel t="Values" m="mt-[11px]" /><Well t="Sum of OrderCount" m="mt-[5px]" />
      <VLabel t="Details" m="mt-[11px]" /><VAdd t="Add data fields here" m="mt-[5px] h-[28px] pl-[10px]" />
      <VLabel t="Tooltips" m="mt-[11px]" /><VAdd t="Add data fields here" m="mt-[5px] h-[28px] pl-[10px]" />
      <VLabel t="Drill through" m="mt-[11px] font-semibold" />
      <div className="mt-[9px] flex h-4 shrink-0 items-center justify-between pr-[6px] pl-[12px] text-[11.500px] text-[#3b3a39]">
        Cross-report
        <div className="flex h-4 w-8 items-center rounded-full border border-[#605e5c] bg-white pl-[4px] text-[9px] text-[#605e5c]"><div className="mr-[2px] h-2 w-2 rounded-full bg-[#605e5c]" />Off</div>
      </div>
      <div className="mt-[11px] flex h-4 shrink-0 items-center justify-between pr-[6px] pl-[12px] text-[11.500px] text-[#3b3a39]">
        Keep all filters
        <div className="flex h-4 w-8 items-center rounded-full bg-[#605e5c] pl-[5px] text-[9px] font-semibold text-white">On<div className="ml-[2px] h-2 w-2 rounded-full bg-white" /></div>
      </div>
      <VAdd t="Add drill-through fields here" m="mt-[10px] h-[26px] pl-[8px]" />
    </aside>
  );
}

/* ---------- data pane ---------- */
const TableIco = () => <Ico w={13} h={13}><path d="M.5 .5H12.500V12.500H.5ZM.5 3.500H12.500M.5 6.500H12.500M.5 9.500H12.500M4.500 3V12.500M8.500 3V12.500" stroke="#3b3a39" /><path d="M0 1H13" stroke="#3b3a39" strokeWidth="1.500" /></Ico>;
function TableRow({ name, badge }: { name: string; badge?: boolean }) {
  return (
    <div className="flex h-6 items-center pl-[7px] text-[11.900px] text-[#3b3a39]">
      <Ico w={12} h={7}><path d="M.5 .5 6 6 11.500 .5" stroke="#797775" /></Ico>
      <div className="relative ml-[3px]">
        <TableIco />
        {badge && (
          <svg width="12" height="12" viewBox="0 0 12 12" className="absolute top-[5px] left-[7px]"><circle cx="6" cy="6" r="6" fill="#117865" /><path d="M3.500 6 5.300 7.800 8.500 4.500" fill="none" stroke="#fff" strokeWidth="1.200" /></svg>
        )}
      </div>
      <span className="ml-[6px]">{name}</span>
    </div>
  );
}
function Field({ name, on, kind }: { name: string; on?: boolean; kind?: "sum" | "date" }) {
  return (
    <div className="flex h-6 items-center pl-[24px] text-[11.900px] text-[#3b3a39]">
      <div className="w-[14px]">{kind === "date" && <Ico w={7} h={12}><path d="M.5 .5 6 6 .5 11.500" stroke="#797775" /></Ico>}</div>
      {on ? (
        <svg width="12" height="12" viewBox="0 0 12 12"><rect width="12" height="12" rx="1.500" fill="#117865" /><path d="M2.500 6 5 8.500 9.800 3.600" fill="none" stroke="#fff" strokeWidth="1.200" /></svg>
      ) : (
        <div className="h-3 w-3 rounded-[2px] border border-[#797775] bg-[#f8f7f6]" />
      )}
      <div className="flex w-[26px] justify-center pl-[3px]">
        {kind === "sum" && <Ico w={11} h={14}><path d="M10 2V.8H1L6 7 1 13.200H10.500V12" strokeWidth="1.200" /></Ico>}
        {kind === "date" && <Calendar />}
      </div>
      {name}
    </div>
  );
}
function DataPane() {
  return (
    <aside className="flex w-[181px] shrink-0 flex-col border-l border-[#d2d0ce] bg-[#f3f2f1]">
      <div className="mt-[10px] flex h-[20px] items-center justify-between pr-[8px] pl-[9px] text-[14.500px] font-semibold text-[#252423]">Data<Dbl /></div>
      <div className="mt-[15px] ml-[4px] flex h-[27px] w-[172px] items-center gap-[7px] rounded-[2px] border border-[#797775] bg-white pl-[7px] text-[12.500px] text-[#605e5c]"><Search s={15} />Search</div>
      <div className="mt-[9px] flex flex-col">
        <TableRow name="OrderDelivered" badge />
        <Field name="CustomerId" on /><Field name="OrderCount" on />
        <TableRow name="OrderDelivered (2)" />
        <Field name="AddressLine1" /><Field name="AddressLine2" /><Field name="City" /><Field name="CustomerId" /><Field name="FirstName" /><Field name="LastName" /><Field name="MiddleName" />
        <Field name="OrderId" kind="sum" /><Field name="OrderStatusId" kind="sum" /><Field name="PostalCode" /><Field name="ShippedOn" kind="date" />
        <Field name="ShippingId" kind="sum" /><Field name="StateId" kind="sum" /><Field name="Status" />
      </div>
    </aside>
  );
}

function Rail() {
  return (
    <nav className="flex w-[38px] shrink-0 flex-col bg-[#f3f2f1]">
      <div className="flex h-[40px] items-center border-l-2 border-[#117865] pl-[9px]"><Ico w={16} h={16}><path d="M1.500 0V14.500H15.500" /><path d="M4.500 4.500H6.500V12H4.500ZM8.500 7.500H10.500V12H8.500ZM12.500 2.500H14.500V12H12.500Z" fill="#fff" stroke="#252423" strokeWidth="1.200" /></Ico></div>
      <div className="flex h-[40px] items-center pl-[11px]"><Ico w={16} h={16}><path d="M.5 .5H15.500V15.500H.5ZM.5 4.500H15.500M.5 8.200H15.500M.5 12H15.500M5.500 4.500V15.500M10.500 4.500V15.500" stroke="#605e5c" /></Ico></div>
      <div className="flex h-[40px] items-center pl-[10px]"><Ico w={18} h={18}><path d="M.5 6H7.500V12.500H.5ZM.5 8H7.500M10.500 .5H17.500V7H10.500ZM10.500 2.500H17.500M10.500 10.500H17.500V17.500H10.500ZM10.500 12.500H17.500M4 6V3.500H10.500M4 12.500V14.500H10.500" stroke="#605e5c" /></Ico></div>
    </nav>
  );
}

export default function App() {
  return (
    <div className="flex h-[973px] w-[1918px] flex-col overflow-hidden bg-[#f3f2f1] font-['Open_Sans','Noto_Sans',sans-serif]">
      <Ribbon />
      <div className="flex min-h-0 flex-1">
        <div className="flex w-[1355px] shrink-0 flex-col">
          <div className="flex h-[812px]">
            <Rail />
            <main className="flex flex-1 flex-col bg-white">
              <div className="flex h-[741px]"><PieVisual /><MapVisual /></div>
              <svg width="1317" height="2" className="block shrink-0"><path d="M1 1H1317" stroke="#605e5c" strokeWidth="2" strokeDasharray="2 2" /></svg>
            </main>
          </div>
          <div className="flex h-[36px] border-b border-[#d2d0ce]">
            <div className="flex w-[77px] items-center justify-end gap-[18px] pr-[7px]">
              <svg width="4" height="8" viewBox="0 0 4 8"><path d="M4 0V8L0 4Z" fill="#c8c6c4" /></svg>
              <svg width="4" height="8" viewBox="0 0 4 8"><path d="M0 0V8L4 4Z" fill="#c8c6c4" /></svg>
            </div>
            <div className="flex h-[35px] w-[77px] items-center justify-center border-x border-b-[4px] border-x-[#b3b0ad] border-b-[#117865] bg-white pt-[3px] text-[12px] text-[#252423]">Page 1</div>
            <div className="mt-[2px] flex h-[32px] w-[39px] items-center justify-center bg-[#117865]"><svg width="12" height="12"><path d="M6 .5V11.500M.5 6H11.500" stroke="#fff" strokeWidth="3" /></svg></div>
          </div>
        </div>
        <Filters />
        <Visualizations />
        <DataPane />
      </div>
    </div>
  );
}
